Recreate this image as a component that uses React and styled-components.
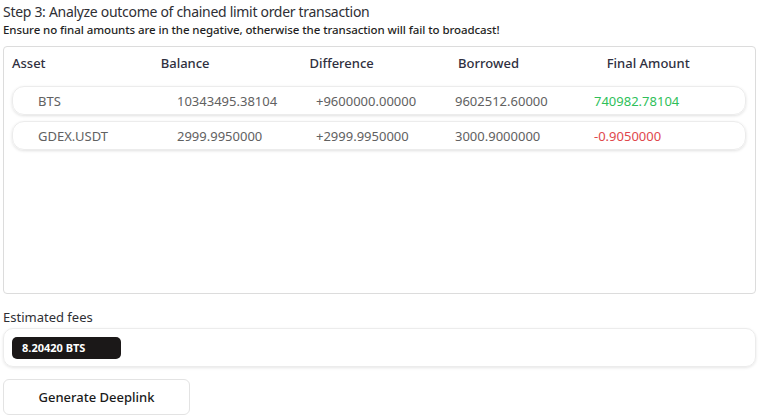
import React from "react";
import styled, { createGlobalStyle } from "styled-components";

const Global = createGlobalStyle`
  html, body { margin: 0; padding: 0; background: #fff; }
  body { font-family: "Noto Sans", "Open Sans", sans-serif; color: #333; }
`;

const Page = styled.div`
  padding: 2px 7px 0 3px;
  display: flex;
  flex-direction: column;
`;

const Title = styled.h2`
  margin: 0;
  font-size: 14px;
  font-weight: 400;
  letter-spacing: -0.3px;
  line-height: 19px;
  color: #2f2f35;
`;

const Subtitle = styled.p`
  margin: 0;
  font-size: 11.5px;
  font-weight: 500;
  letter-spacing: -0.08px;
  line-height: 17px;
  color: #1f1f24;
`;

const Card = styled.div`
  margin-top: 8px;
  height: 248px;
  border: 1px solid #dcdcdc;
  border-radius: 4px;
  padding: 0 9px 0 8px;
  box-sizing: border-box;
`;

const HeaderRow = styled.div`
  display: grid;
  grid-template-columns: repeat(5, 148.7px);
  height: 32px;
  align-items: center;
`;

const HeaderCell = styled.div`
  font-size: 13px;
  font-weight: 500;
  color: #2f3040;
`;

const Rows = styled.div`
  display: flex;
  flex-direction: column;
  gap: 6px;
  margin-top: 7px;
`;

const Row = styled.div`
  display: grid;
  grid-template-columns: repeat(5, 139px);
  height: 29px;
  align-items: center;
  padding-left: 25px;
  border: 1px solid #ececec;
  border-radius: 12px;
  box-shadow: 0 1px 3px rgba(0, 0, 0, 0.12);
  box-sizing: border-box;
`;

const Cell = styled.div`
  font-size: 13px;
  color: ${(p) => (p.$tone === "pos" ? "#2fbf5a" : p.$tone === "neg" ? "#e0474c" : "#616161")};
`;

const FeesLabel = styled.div`
  margin-top: 14px;
  font-size: 13px;
  line-height: 18px;
  color: #2f2f35;
`;

const FeesBox = styled.div`
  margin-top: 2px;
  height: 39px;
  border: 1px solid #ececec;
  border-radius: 10px;
  box-shadow: 0 1px 3px rgba(0, 0, 0, 0.1);
  display: flex;
  align-items: center;
  padding-left: 8px;
  box-sizing: border-box;
`;

const Badge = styled.span`
  display: inline-flex;
  align-items: center;
  width: 109px;
  height: 22px;
  padding-left: 10px;
  box-sizing: border-box;
  background: #1b1818;
  color: #fff;
  border-radius: 5px;
  font-size: 11px;
  font-weight: 700;
`;

const Button = styled.button`
  margin-top: 12px;
  width: 187px;
  height: 36px;
  border: 1px solid #e3e3e3;
  border-radius: 6px;
  background: #fff;
  font-family: inherit;
  font-size: 13px;
  font-weight: 500;
  color: #1a1a1a;
`;

const rows = [
  ["BTS", "10343495.38104", "+9600000.00000", "9602512.60000", "740982.78104", "pos"],
  ["GDEX.USDT", "2999.9950000", "+2999.9950000", "3000.9000000", "-0.9050000", "neg"],
];

export default function App() {
  return (
    <>
      <Global />
      <Page>
        <Title>Step 3: Analyze outcome of chained limit order transaction</Title>
        <Subtitle>Ensure no final amounts are in the negative, otherwise the transaction will fail to broadcast!</Subtitle>
        <Card>
          <HeaderRow>
            <HeaderCell>Asset</HeaderCell>
            <HeaderCell>Balance</HeaderCell>
            <HeaderCell>Difference</HeaderCell>
            <HeaderCell>Borrowed</HeaderCell>
            <HeaderCell>Final Amount</HeaderCell>
          </HeaderRow>
          <Rows>
            {rows.map((r) => (
              <Row key={r[0]}>
                <Cell>{r[0]}</Cell>
                <Cell>{r[1]}</Cell>
                <Cell>{r[2]}</Cell>
                <Cell>{r[3]}</Cell>
                <Cell $tone={r[5]}>{r[4]}</Cell>
              </Row>
            ))}
          </Rows>
        </Card>
        <FeesLabel>Estimated fees</FeesLabel>
        <FeesBox>
          <Badge>8.20420 BTS</Badge>
        </FeesBox>
        <Button>Generate Deeplink</Button>
      </Page>
    </>
  );
}
